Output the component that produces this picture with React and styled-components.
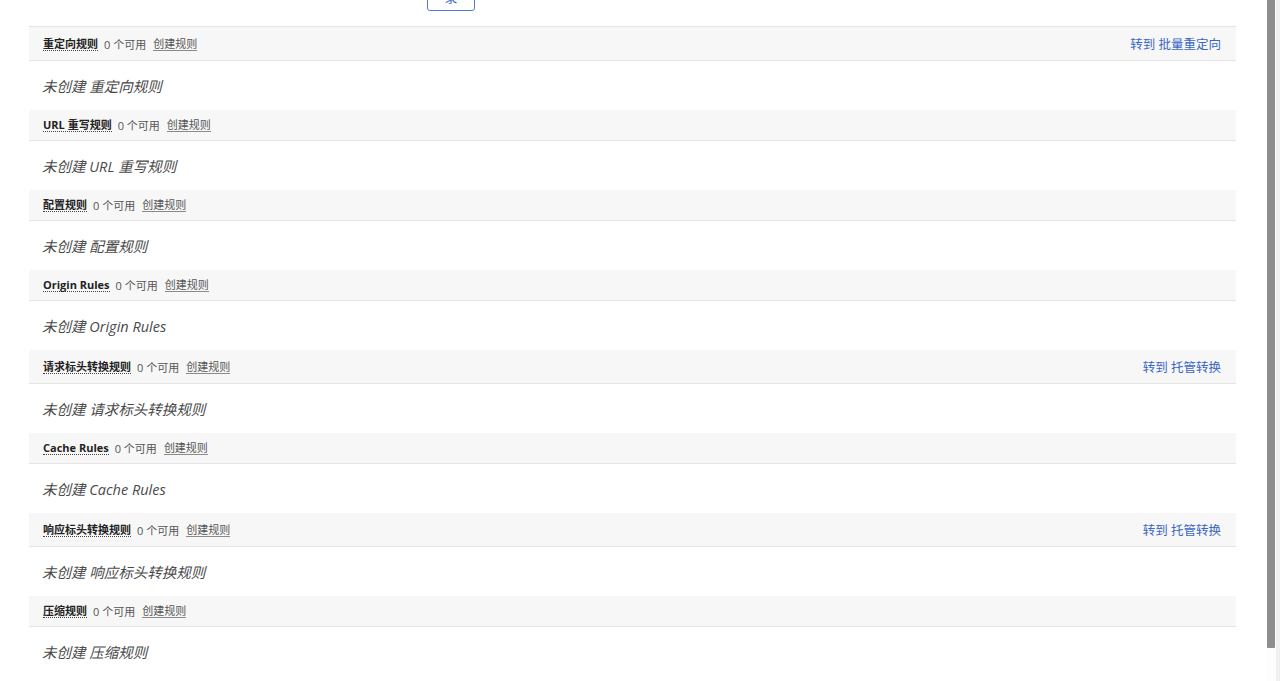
import React from 'react'
import styled, { createGlobalStyle } from "styled-components";

const GlobalStyle = createGlobalStyle`
html, body {
  margin: 0;
  padding: 0;
  background: #fff;
  overflow: hidden;
}
body {
  font-family: "Open Sans", "Noto Sans CJK SC", sans-serif;
}
`;

const Page = styled.div`
height: 100vh;
display: flex;
background: #fff;
overflow: hidden;
`;

const Main = styled.main`
flex: 1;
min-width: 0;
padding: 0 31px 38px 29px;
`;

const ScrollTrack = styled.div`
flex: none;
width: 13px;
height: 100%;
background: linear-gradient(to right, #fdfdfd 0 9px, #f1f1f1 9px);
`;

const ScrollThumb = styled.div`
width: 8px;
height: 648px;
background: #8e8e8e;
border-radius: 0 0 1px 1px;
`;

const Toolbar = styled.div`
height: 26px;
overflow: hidden;
display: flex;
align-items: flex-end;
padding-left: 398px;
`;

const Button = styled.button`
flex: none;
width: 48px;
height: 30px;
margin-bottom: 15px;
border: 1px solid #4f7bd3;
border-radius: 3px;
background: #fff;
color: #3a66c4;
font-family: "Noto Sans CJK SC", sans-serif;
font-size: 13px;
line-height: 1;
padding: 0;
`;

const Header = styled.div`
display: flex;
align-items: center;
height: ${props => props.$tall ? 33 : 30}px;
padding: 0 15px 0 14px;
background: #f7f7f7;
border-bottom: 1px solid #e4e4e4;
border-top: ${props => props.$first ? '1px solid #e4e4e4' : 'none'};
font-size: 11px;
color: #555;
white-space: nowrap;
`;

const Label = styled.span`
font-weight: 700;
color: #222;
border-bottom: 1px dotted #444;
line-height: 13px;
margin-right: 6px;
`;

const Count = styled.span`
margin-right: 7px;
`;

const Create = styled.span`
color: #555;
border-bottom: 1px solid #8a8a8a;
line-height: 13px;
`;

const Goto = styled.span`
margin-left: auto;
color: #3a66c4;
font-size: 12.5px;
`;

const Empty = styled.div`
height: 49px;
display: flex;
align-items: center;
padding-left: 13px;
font-style: italic;
font-size: 14.5px;
color: #4a4a4a;
`;

const sections = [
  { name: '重定向规则', link: '批量重定向' },
  { name: 'URL 重写规则' },
  { name: '配置规则' },
  { name: 'Origin Rules' },
  { name: '请求标头转换规则', link: '托管转换' },
  { name: 'Cache Rules' },
  { name: '响应标头转换规则', link: '托管转换' },
  { name: '压缩规则' },
];

function App() {
  return (
    <Page>
      <GlobalStyle />
      <Main>
        <Toolbar>
          <Button>录</Button>
        </Toolbar>
        {sections.map((s, i) => (
          <section key={s.name}>
            <Header $first={i === 0} $tall={!!s.link}>
              <Label>{s.name}</Label>
              <Count>0 个可用</Count>
              <Create>创建规则</Create>
              {s.link && <Goto>转到 {s.link}</Goto>}
            </Header>
            <Empty>未创建 {s.name}</Empty>
          </section>
        ))}
      </Main>
      <ScrollTrack>
        <ScrollThumb />
      </ScrollTrack>
    </Page>
  )
}

export default App;
